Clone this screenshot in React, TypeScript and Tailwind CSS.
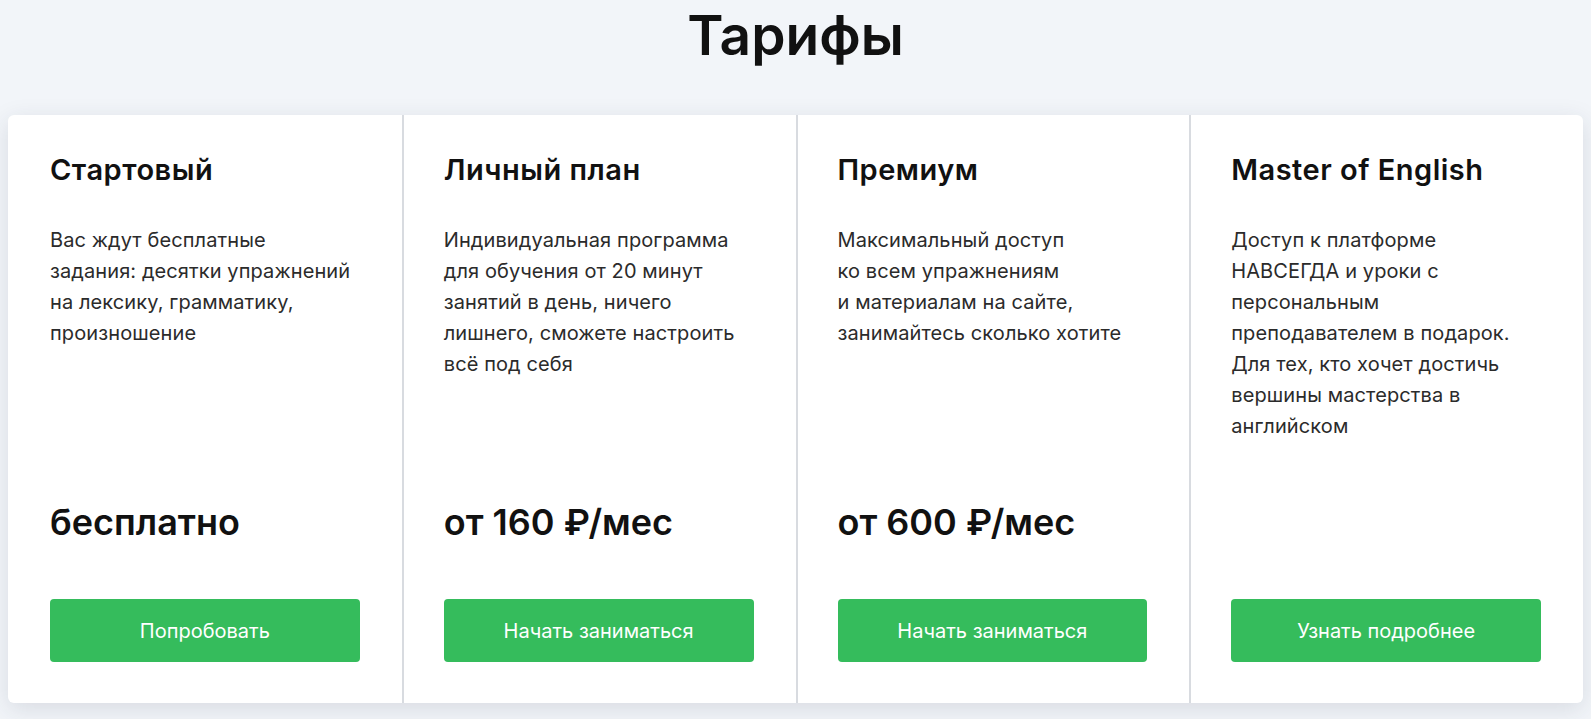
const PLANS = [
  {
    title: 'Стартовый',
    lines: ['Вас ждут бесплатные', 'задания: десятки упражнений', 'на лексику, грамматику,', 'произношение'],
    price: 'бесплатно',
    cta: 'Попробовать',
  },
  {
    title: 'Личный план',
    lines: [
      'Индивидуальная программа',
      'для обучения от 20 минут',
      'занятий в день, ничего',
      'лишнего, сможете настроить',
      'всё под себя',
    ],
    price: 'от 160 ₽/мес',
    cta: 'Начать заниматься',
  },
  {
    title: 'Премиум',
    lines: ['Максимальный доступ', 'ко всем упражнениям', 'и материалам на сайте,', 'занимайтесь сколько хотите'],
    price: 'от 600 ₽/мес',
    cta: 'Начать заниматься',
  },
  {
    title: 'Master of English',
    lines: [
      'Доступ к платформе',
      'НАВСЕГДА и уроки с',
      'персональным',
      'преподавателем в подарок.',
      'Для тех, кто хочет достичь',
      'вершины мастерства в',
      'английском',
    ],
    price: '',
    cta: 'Узнать подробнее',
  },
]

export default function App() {
  return (
    <div className="min-h-screen bg-[#f2f5f9] px-2 font-['Inter',sans-serif] text-[#111]">
      <h1 className="h-[115px] pt-[1px] text-center text-[55px] font-semibold leading-[68px]">Тарифы</h1>
      <div className="grid h-[588px] grid-cols-4 overflow-hidden rounded-md bg-white shadow-[0_6px_24px_rgba(40,50,70,0.13)]">
        {PLANS.map((p, i) => (
          <div
            key={p.title}
            className={
              'flex flex-col pb-[41px] pr-[42px] pt-[37px] ' +
              (i > 0 ? 'border-l-2 border-[#d8dbe0] pl-[40px]' : 'pl-[42px]')
            }
          >
            <h2 className="text-[29px] font-semibold leading-[36px] tracking-[0.5px]">{p.title}</h2>
            <p className="mt-[37px] flex-1 text-[20px] leading-[31px] tracking-[0.1px] text-[#2b2b2b]">
              {p.lines.map((l) => (
                <span key={l} className="block whitespace-nowrap">
                  {l}
                </span>
              ))}
            </p>
            <div className="mb-[55px] h-[44px] text-[36px] font-semibold leading-[44px]">{p.price}</div>
            <button className="h-[63px] w-full rounded-[4px] bg-[#35bc5c] text-[20px] text-white">{p.cta}</button>
          </div>
        ))}
      </div>
    </div>
  )
}
